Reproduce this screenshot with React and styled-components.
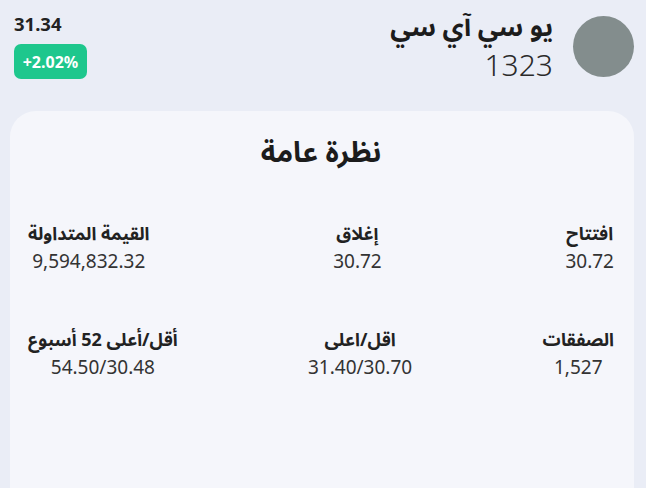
import React from "react";
import styled, { createGlobalStyle } from "styled-components";

const GlobalStyle = createGlobalStyle`
  html, body {
    margin: 0;
    padding: 0;
    background: #eaedf6;
    font-family: "Noto Sans", "Noto Sans Arabic", "Noto Sans Arabic UI", "Noto Naskh Arabic", "DejaVu Sans", sans-serif;
    color: #222;
  }
`;

const Page = styled.div`
  direction: rtl;
  min-height: 488px;
  overflow: hidden;
`;

const Header = styled.header`
  display: flex;
  justify-content: space-between;
  align-items: flex-start;
  padding: 16px 12px 0 14px;
  height: 95px;
  box-sizing: border-box;
`;

const Identity = styled.div`
  display: flex;
  align-items: flex-start;
  gap: 20px;
`;

const Avatar = styled.div`
  width: 61px;
  height: 61px;
  border-radius: 50%;
  background: #838d8d;
`;

const NameBlock = styled.div`
  display: flex;
  flex-direction: column;
  align-items: flex-start;
  margin-top: -9px;
`;

const Name = styled.h1`
  margin: 0;
  font-size: 26px;
  font-weight: 700;
  line-height: 39px;
  color: #1c1c1c;
`;

const Symbol = styled.div`
  font-size: 30px;
  font-weight: 300;
  line-height: 38px;
  color: #2a2a2a;
`;

const PriceBlock = styled.div`
  direction: ltr;
  display: flex;
  flex-direction: column;
  align-items: flex-start;
  gap: 8px;
  margin-top: -4px;
`;

const Price = styled.div`
  font-size: 18.5px;
  font-weight: 700;
  line-height: 24px;
  color: #222;
`;

const Change = styled.div`
  background: ${(p) => (p.up ? "#1ec78d" : "#e0475a")};
  color: #fff;
  font-size: 16px;
  font-weight: 700;
  border-radius: 7px;
  width: 73px;
  height: 35px;
  display: flex;
  align-items: center;
  justify-content: center;
`;

const Card = styled.section`
  margin: 16px 12px 0 10px;
  background: #f5f6fb;
  border-radius: 26px;
  height: 420px;
  padding: 20px 20px 0 18px;
  box-sizing: border-box;
`;

const Title = styled.h2`
  margin: 0 0 48px;
  text-align: center;
  font-size: 28.5px;
  font-weight: 700;
  line-height: 40px;
  color: #1c1c1c;
`;

const StatRow = styled.div`
  display: flex;
  justify-content: space-between;
  margin-bottom: 50px;
`;

const Stat = styled.div`
  display: flex;
  flex-direction: column;
  align-items: center;
`;

const Label = styled.div`
  font-size: 18px;
  font-weight: 700;
  line-height: 28px;
  color: #222;
`;

const Value = styled.div`
  font-size: 19px;
  font-weight: 400;
  line-height: 28px;
  color: #333;
`;

const rows = [
  [
    { label: "افتتاح", value: "30.72" },
    { label: "إغلاق", value: "30.72" },
    { label: "القيمة المتداولة", value: "9,594,832.32" },
  ],
  [
    { label: "الصفقات", value: "1,527" },
    { label: "اقل/اعلى", value: "31.40/30.70" },
    { label: "أقل/أعلى 52 أسبوع", value: "54.50/30.48" },
  ],
];

export default function App() {
  return (
    <Page>
      <GlobalStyle />
      <Header>
        <Identity>
          <Avatar />
          <NameBlock>
            <Name>يو سي آي سي</Name>
            <Symbol>1323</Symbol>
          </NameBlock>
        </Identity>
        <PriceBlock>
          <Price>31.34</Price>
          <Change up>+2.02%</Change>
        </PriceBlock>
      </Header>
      <Card>
        <Title>نظرة عامة</Title>
        {rows.map((row, i) => (
          <StatRow key={i}>
            {row.map((s) => (
              <Stat key={s.label}>
                <Label>{s.label}</Label>
                <Value dir="ltr">{s.value}</Value>
              </Stat>
            ))}
          </StatRow>
        ))}
      </Card>
    </Page>
  );
}
